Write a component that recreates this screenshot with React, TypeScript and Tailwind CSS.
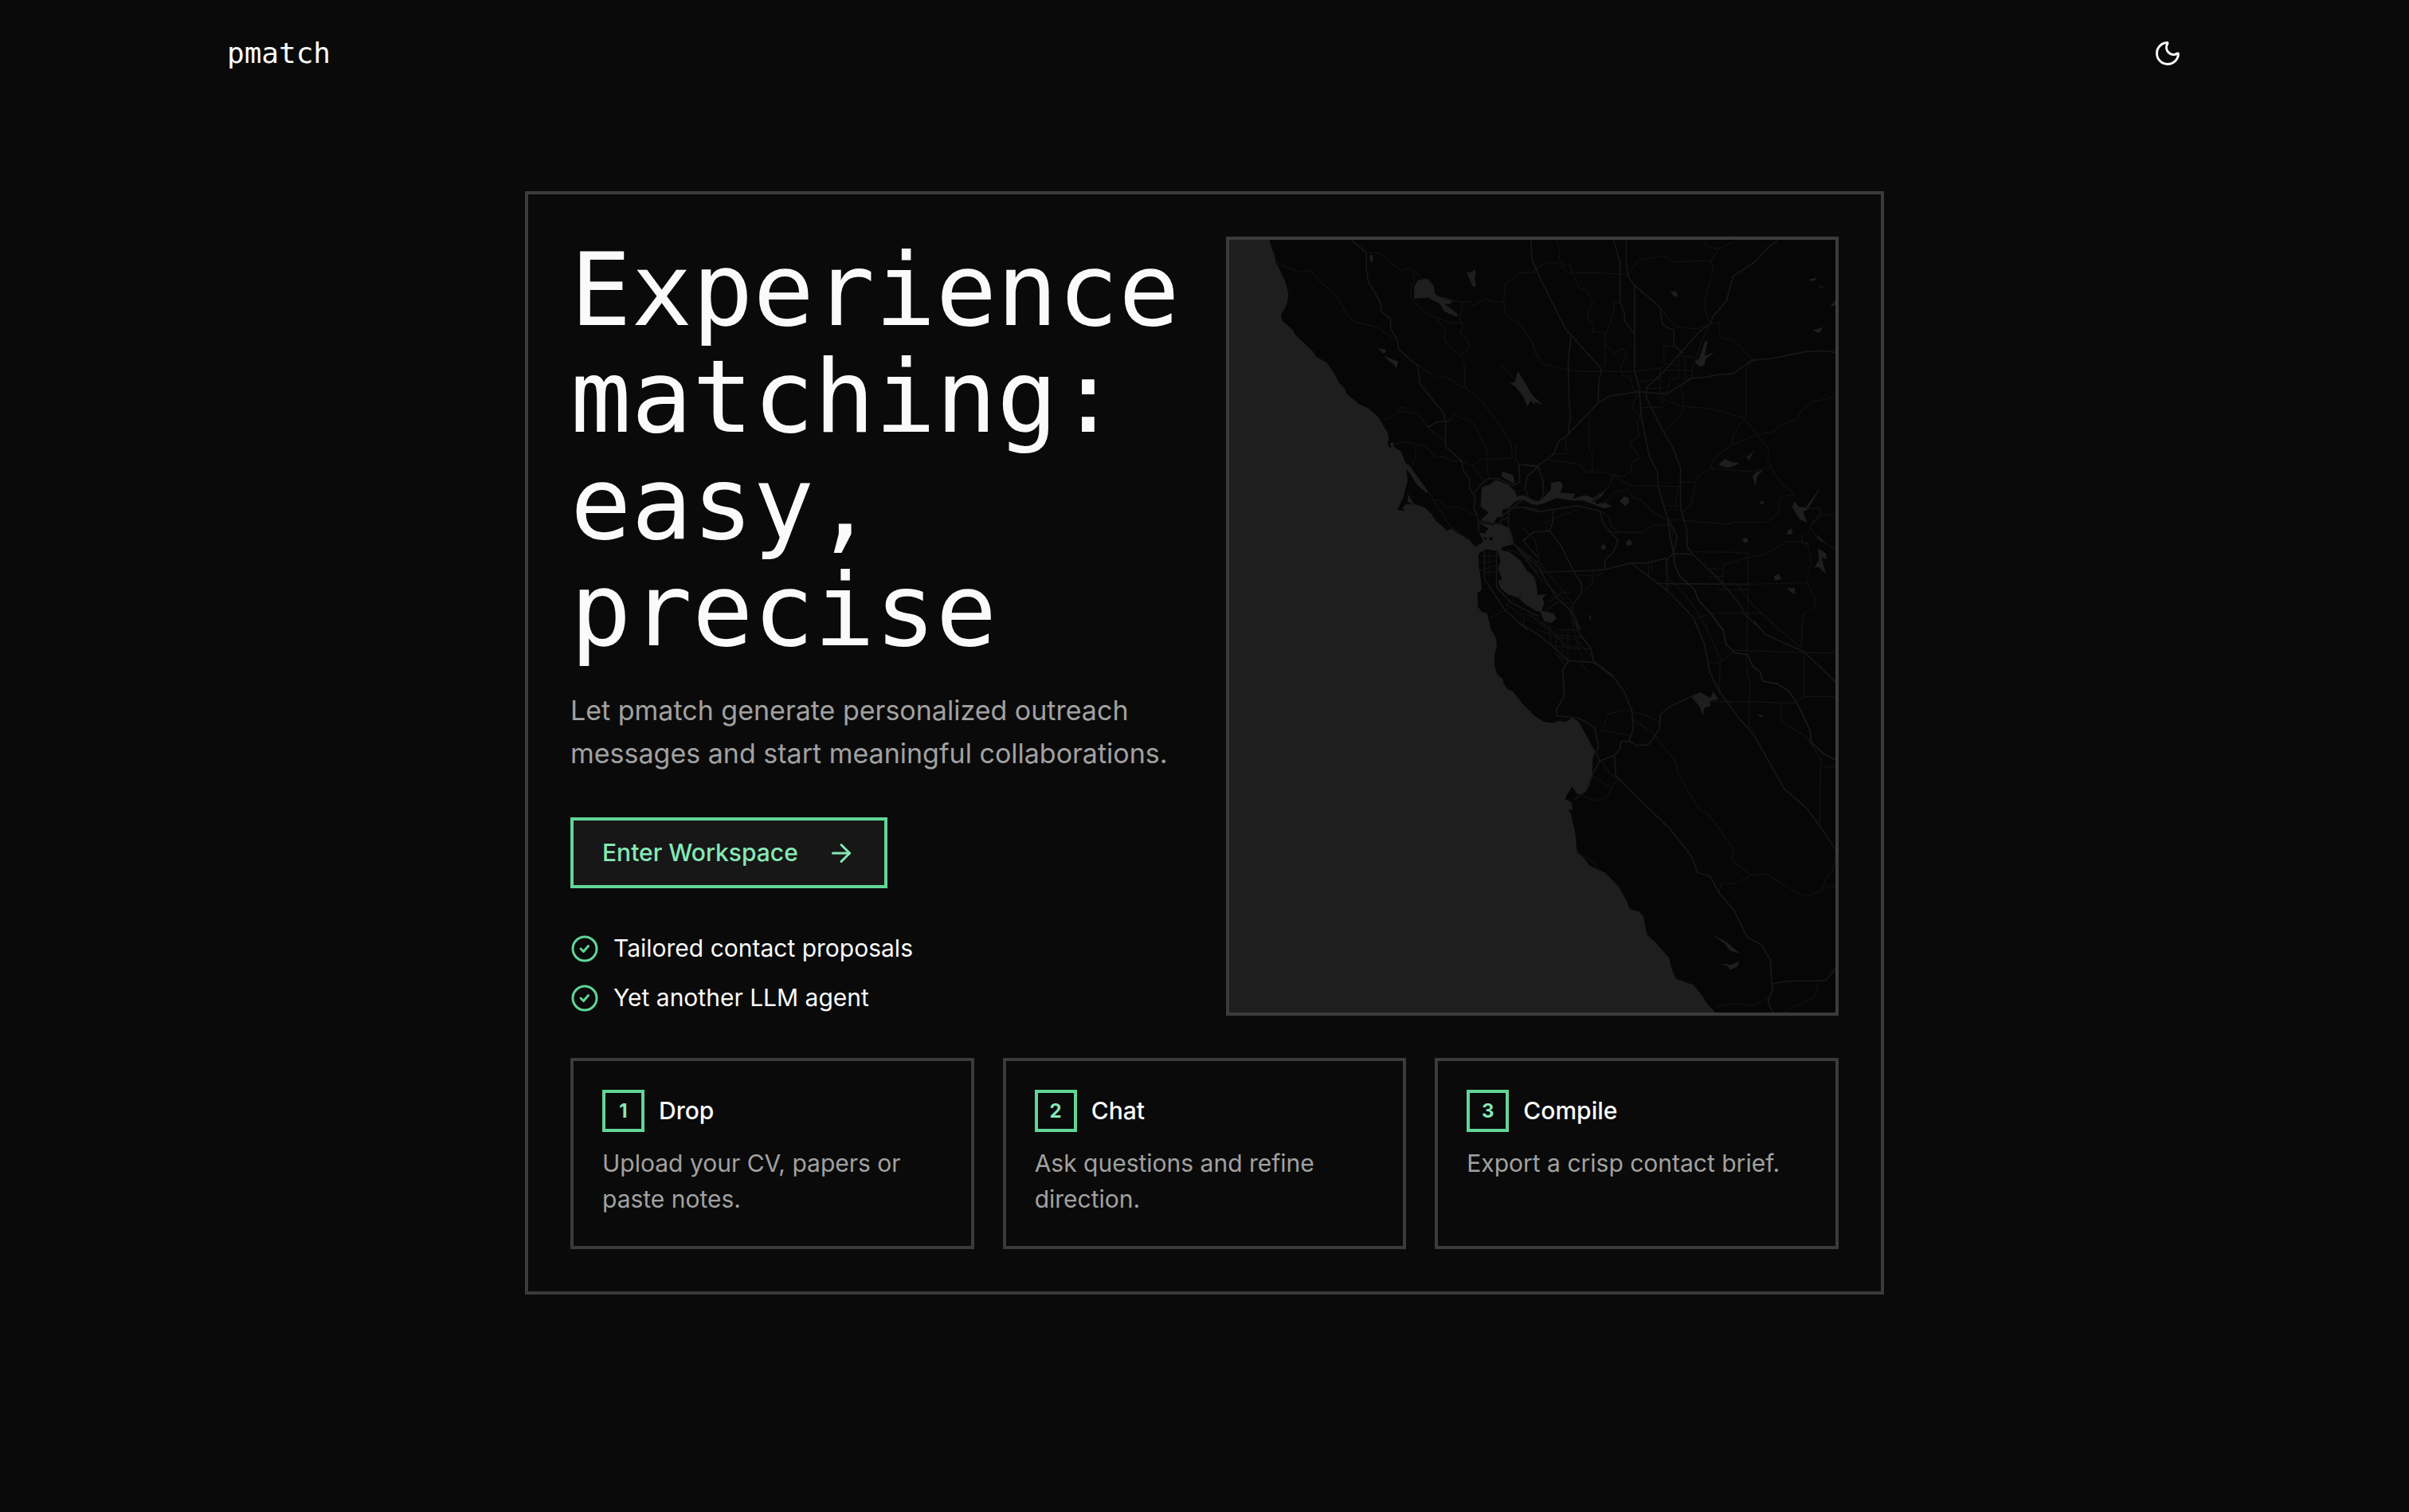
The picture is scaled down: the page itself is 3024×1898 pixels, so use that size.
import { ArrowRight, Moon } from "lucide-react";

const MAJOR_WEST = [
  "M497 33L520 52L555 82L555 140L562 190L608 270L612 305L645 330L648 370L672 410L676 445L750 510L756 575L845 685L853 715L853 812L912 865L922 905L943 935L945 970L965 1005L960 1045L975 1075L978 1130",
  "M958 990L985 955L1015 933L1050 932L1110 960L1135 942M1130 878L1132 940M1130 878L1200 890M1200 890L1160 925L1152 970L1165 1000",
  "M870 715L820 720L786 740M1090 1080L1060 1090L1060 1105L975 1095M1060 1080L1145 1010L1200 1030M1090 1080L1095 1045L1145 1040L1200 1050M1090 1080L1090 1110L1110 1180L1200 1250",
  "M1000 1200L1000 1310L1075 1425L1140 1485L1160 1500M1045 1200L1045 1340L1100 1400L1200 1450M1120 1190L1200 1290M1145 1165L1200 1230M1145 1165L1185 1135",
];
const MINOR_WEST = [
  "M215 120L300 155L345 150L385 195L445 245L475 305L510 342L600 365L672 415",
  "M555 82L605 84L685 150L715 140L735 165L735 190L722 215L725 255L785 315L880 348L915 345",
  "M735 145L762 180M860 260L918 268L908 325L918 360L908 385L940 415L942 440L912 468L925 515L925 580L938 600",
  "M815 325L850 370L850 410L870 440L912 468M742 500L820 555L850 548L938 600L980 630L1060 735L1100 800L1105 855",
  "M918 268L945 265L960 283L1000 258L1040 268L1072 265L1080 200L1130 160L1200 155M1072 265L1080 320L1125 345L1165 395L1200 480",
  "M615 710L640 708L675 680L750 687L786 740L853 795M672 680L680 665L703 668L705 685",
  "M870 715L885 692L960 725L985 780L1010 830L1012 862L1105 855M1012 862L990 858L955 885L995 940M1005 862L1018 935M912 868L955 885",
  "M655 808L690 792L780 812L815 852L845 850L880 868L912 868M743 808L738 860L725 890",
  "M787 980L865 1105L935 1160M810 1015L830 1015L858 1042L905 1040L975 1075M1060 505L1110 555M1118 800L1118 862L1130 878M1175 33L1178 110L1200 150",
  "M985 1225L1035 1225M985 1250L1035 1245M985 1278L1040 1260M1018 1205L1018 1300M1005 1285L1045 1285M1125 1380L1195 1345M1200 1260L1130 1215L1085 1200M1085 1425L1085 1400L1110 1390M1025 1455L1075 1430M1090 1410L1150 1455L1145 1490",
];
const MAJOR_EAST = [
  "M35 33L38 110L60 160L165 370L300 520L290 565L288 648L165 775L140 790L120 840L60 885L0 880",
  "M185 400L175 490L178 640L183 700L175 765M393 33L393 120L400 172L425 205L520 288L530 355L572 375L573 432L605 460",
  "M345 33L370 120L370 270L387 310L387 340L425 390M425 205L425 530L445 600",
  "M960 38L930 60L880 115L795 172L770 265L722 320L708 352L670 378L530 535L470 590L468 625L500 690L535 760L570 820L597 890L598 1045L622 1130L622 1188L640 1215L740 1310L820 1405L845 1450L900 1500",
  "M288 648L330 622L440 605L545 615L640 555L700 550L730 542L795 538L865 488L945 480L1070 455L1140 452L1182 458",
  "M443 610L450 700L480 850L512 910L512 960L545 1070L585 1150L570 1215L545 1240M60 885L80 940L82 990L70 1015",
  "M0 1040L60 1058L110 1050L210 1035L295 1055L305 1100L362 1165L345 1210L312 1240L315 1275L240 1280L75 1285M315 1275L410 1250L470 1250L545 1232M545 1235L548 1355",
  "M10 1165L40 1135L105 1130L150 1190L195 1280L225 1330L225 1365L190 1410L190 1430L220 1500M105 1130L115 1100L120 1050M410 1250L510 1325L560 1365L645 1455L665 1500M510 1328L855 1330M570 1215L640 1217",
  "M0 1210L60 1265L130 1380L180 1425L210 1500",
];
const MINOR_EAST = [
  "M130 33L145 80L138 105L160 130L183 125L190 160L215 215L245 225L268 275L248 305L250 335L272 350L265 378L312 385L318 430L345 460L380 442L395 465L372 520L380 545L410 552L420 600L440 605L415 660L430 685L450 690L435 715L440 770L405 800L445 855L415 870L412 905L380 925L345 918L325 965L265 1020",
  "M0 157L40 157L85 122L135 120L175 160L280 158L400 165L440 110L530 95L575 117L712 112L745 65L800 40M712 112L720 145L690 260L690 300L710 350",
  "M690 33L692 55L730 68L745 60M0 358L40 420L75 500L120 510L150 520L220 530L425 530L500 520L535 515M348 272L370 272M348 272L345 305L315 400L312 530",
  "M520 288L578 360L660 370L708 352M745 345L745 400L800 415L870 485L845 520L845 700M745 345L708 352L680 410L645 510L640 555",
  "M535 435L535 500L590 505M535 435L575 432M520 515L520 610L550 605L555 560L590 555L590 470L650 475M615 475L615 560L640 555L640 525L550 525M465 595L530 590M450 665L530 665L530 620M440 570L520 555",
  "M595 580L608 620L608 680L538 758M510 625L600 660L700 668L835 703L895 780L930 820L925 860L940 895L980 955L1025 990L970 1005L968 1060L925 1095L790 1098L785 1105L605 1090",
  "M835 703L795 770L795 800L720 860L710 895M795 805L880 770L950 755L965 735L1035 710L1050 680L1090 645L1182 625M710 895L860 905L940 890M710 895L660 925L640 1025L605 1060",
  "M255 690L255 828L265 835L265 905M165 775L168 840L115 840M100 862L215 878L245 908L320 910L415 960L590 962L580 1010L578 1050M598 945L650 945M540 1035L598 1035",
  "M300 1030L340 1000L345 985L380 978L400 975L420 1005L450 1015L490 1055L550 1090L605 1085M320 1135L460 1135L490 1110L560 1105L570 1150M295 1055L330 1080L335 1110L370 1135",
  "M640 1208L800 1210L850 1215L850 1500M760 1255L850 1230L920 1215L1000 1168L1075 1175L1090 1250L1070 1320L1105 1385L1100 1420L1060 1440L1055 1500M855 1330L1070 1325M700 1272L758 1272L758 1300L700 1302M758 1255L758 1330M740 1350L850 1350",
  "M1182 1068L1130 1070L1085 1110L1085 1135L1055 1150L1055 1175L1075 1180M1085 1110L1128 1060L1120 1045L1075 1045M1085 1115L1115 1160L1182 1200M478 1245L478 1300M490 1235L490 1280M548 1300L640 1400L700 1500M810 1330L870 1410L970 1500M710 1440L905 1440M645 1462L710 1440",
  "M265 1280L265 1330L225 1360M215 1295L275 1300L310 1285M0 1115L50 1165L75 1285M15 1240L80 1320L160 1390M60 1240L150 1350L190 1400M85 1100L140 1075L210 1050M90 1090L95 1130M100 1400L150 1360L185 1360M90 1430L130 1400L180 1400M0 1440L60 1460L100 1500M30 1440L90 1500",
];
const RIVERS_EAST = [
  "M550 1090L560 1160L572 1215L575 1255L595 1300L650 1350L665 1390L715 1445L755 1500",
];
const MAJOR_SOUTH = [
  "M430 0L500 45L552 90L612 148L702 155L770 210L808 265L835 335L840 400L825 450L797 452L793 480L773 505L778 580L900 710L968 780L1045 885L1065 945L1110 960L1140 1020L1195 1090L1240 1190L1288 1215L1322 1275L1325 1360L1330 1380L1313 1435L1330 1472",
  "M612 148L592 185L598 280L570 330L570 355L650 365L705 400L718 480L705 490M705 490L722 525L773 505M722 525L695 580L672 640L635 670M825 450L850 467L892 465L932 405L935 350L970 320L1060 275",
  "M1055 0L1090 85L1108 190L1140 260L1215 370L1262 425L1370 630L1450 705L1495 770L1551 860M1265 0L1305 50L1440 115L1551 228",
  "M640 0L650 45L690 100L700 150L770 205M1330 1365L1370 1355L1515 1352L1551 1305",
];
const MINOR_SOUTH = [
  "M1108 302L1245 302L1405 308L1440 283L1551 283M1440 115L1440 283M1238 0L1238 180L1250 235L1245 400M1190 108L1440 118L1551 118M1085 0L1150 150L1190 115M1100 158L1145 155L1142 260M1318 0L1430 100L1433 0",
  "M835 342L870 348L930 375M840 372L905 415L930 450L990 530L1000 580L1045 660L1075 710L1100 720L1155 800L1192 860L1185 895L1250 955L1310 950L1365 990L1445 1035L1500 1015L1520 960L1540 940L1551 880",
  "M1140 1020L1150 985L1190 988L1250 960M725 410L830 430M735 400L750 350L800 335L835 337M730 530L760 575L793 600M700 585L765 628L780 600M765 628L745 665L705 675L660 655M640 870L700 905L720 935",
  "M1360 308L1360 378L1450 435L1515 550L1551 548M1498 530L1495 770M1515 998L1551 998M1130 1450L1190 1438L1260 1447L1325 1410M1370 1472L1400 1450L1430 1440L1480 1410L1490 1355M568 120L600 165M655 155L680 190",
  "M500 30L550 50L660 60L690 100M545 0L550 90M520 0L600 90L690 105M590 30L590 130M610 25L610 145M570 60L640 70L665 150M550 90L650 105M625 0L640 70L690 130M570 30L645 35M568 45L568 125L612 148",
];
const RIVERS_SOUTH = [
  "M1130 0L1155 30L1165 85L1195 118L1240 125L1260 170L1285 190L1295 225L1345 235L1385 262L1410 300L1435 350L1460 410L1465 455L1510 500L1551 520",
];
const OCEAN_NORTH =
  "M0 0L190 33L200 70L208 85L215 120L232 150L236 165L248 185L262 235L258 268L245 300L233 315L240 340L280 375L288 392L318 420L355 455L367 475L405 495L430 530L455 575L475 595L480 612L525 650L562 668L600 700L635 760L640 780L635 802L645 820L650 808L685 830L700 865L705 880L710 940L695 1000L672 1050L700 1055L690 1045L702 1030L735 1028L775 1042L800 1065L815 1090L845 1115L858 1130L875 1120L905 1142L940 1160L965 1188L995 1185L1000 1200L978 1215L978 1260L985 1300L990 1350L973 1365L975 1415L990 1435L1010 1440L1022 1500L0 1500Z";
const OCEAN_SOUTH =
  "M-620 -4L333 -4L340 30L357 60L360 95L352 130L352 165L362 200L380 215L385 235L400 258L415 262L455 315L490 352L525 378L560 383L575 375L602 378L625 363L645 375L660 400L690 460L705 488L697 520L695 575L688 615L670 645L645 652L625 622L605 655L600 670L622 678L628 708L612 710L620 720L635 790L640 850L645 870L670 895L685 918L740 945L790 1000L815 1050L828 1082L860 1092L875 1110L888 1180L915 1205L940 1235L965 1265L975 1310L990 1345L1050 1368L1080 1405L1100 1440L1130 1475L-620 1475Z";
const LAKES_WEST = [
  "M735 210L750 185L785 180L808 205L815 240L832 248L885 262L870 275L850 275L895 310L900 325L865 312L845 300L832 275L810 265L790 252L735 255Z",
  "M568 95L575 88L582 105L573 124ZM932 155L950 158L962 145L967 160L963 180L968 210L955 210ZM1125 527L1145 560L1170 605L1190 632L1188 655L1172 638L1160 660L1155 635L1115 585L1095 575L1113 570Z",
  "M620 470L675 492L668 518L655 500L640 490ZM598 442L630 448L622 465ZM1065 905L1085 912L1108 920L1113 955L1090 940L1065 925Z",
  "M643 800L655 795L660 810L685 870L715 880L787 980L782 987L745 955L720 915L690 875ZM712 990L735 1030L710 1020Z",
  "M990 965L1020 955L1042 937L1090 955L1115 980L1122 1000L1145 995L1200 1020L1200 1035L1140 1010L1115 1020L1090 1045L1065 1050L1070 1070L1045 1080L1035 1100L985 1090L1015 1060L985 1038Z",
  "M978 1100L1035 1108L1050 1100L1095 1120L1105 1150L1108 1180L1070 1190L1060 1200L1095 1210L1135 1240L1160 1280L1185 1300L1195 1330L1200 1435L1160 1410L1125 1380L1090 1370L1060 1345L1050 1320L1065 1310L1050 1270L1060 1245L1050 1205L1000 1198L965 1190L995 1170L980 1135L1000 1140L1015 1120Z",
];
const LAKES_EAST = [
  "M0 555L20 585L40 620L80 655L50 645L35 635L22 662L0 610ZM70 1015L110 975L110 948L145 943L155 960L145 985L200 990L190 1010L235 995L270 1005L320 970L300 1000L275 1015L280 1030L310 1020L340 1038L310 1045L230 1015L190 1015L130 1005L75 1030L40 1030L0 1010L0 1002L40 1020Z",
  "M368 1018L385 1000L403 1005L403 1025L388 1035ZM650 492L668 480L690 415L700 420L688 470L725 458L692 482L688 505L670 512ZM740 880L765 858L785 870L820 875L800 885L775 892ZM835 832L850 850L875 828L862 850L855 865ZM868 925L880 910L910 900L885 925L880 960Z",
  "M1018 1040L1025 1018L1045 1040L1070 1040L1128 960L1075 1050L1058 1058L1075 1100L1045 1085ZM1115 1195L1145 1215L1148 1235L1128 1230L1145 1290L1115 1265L1100 1270L1118 1240ZM948 1302L965 1290L978 1310L955 1318ZM1000 1345L1028 1345L1028 1368L1012 1360Z",
  "M1075 185L1112 175L1100 190ZM1110 228L1125 208L1145 210L1125 213ZM1160 285L1182 262L1182 280ZM1095 375L1135 362L1120 385ZM828 1160L848 1155L852 1170L840 1175ZM393 1172L408 1160L415 1180L397 1187ZM297 1188L310 1178L317 1195L303 1202ZM558 230L580 228L590 250L572 245ZM893 1020L912 1018L905 1033ZM250 1440L262 1455L260 1470ZM1105 1140L1150 1180L1125 1170ZM1000 1130L1015 1120L1020 1140L998 1145Z",
  "M0 1268L35 1290L55 1340L60 1370L92 1368L78 1385L85 1400L75 1430L120 1440L130 1460L110 1475L85 1470L70 1435L35 1415L0 1395Z",
];
const LAKES_SOUTH = [
  "M1045 285L1075 265L1110 290L1120 265L1140 292L1108 300L1112 318L1090 325L1083 355L1075 325ZM1275 350L1295 353L1290 362ZM1115 1178L1165 1205L1215 1250L1180 1240L1160 1212ZM1145 1288L1185 1292L1213 1278L1205 1300L1180 1312L1172 1298ZM530 0L562 0L550 4Z",
];

function Roads({ major, minor }: { major: string[]; minor: string[] }) {
  return (
    <g fill="none" strokeLinejoin="round" strokeLinecap="round">
      <path d={minor.join("")} stroke="#111111" strokeWidth={4} />
      <path d={major.join("")} stroke="#171717" strokeWidth={5} />
    </g>
  );
}

function CoastMap() {
  return (
    <svg
      role="img"
      aria-label="Map of the California coast"
      viewBox="1543 301 761 970"
      preserveAspectRatio="xMidYMid slice"
      className="absolute inset-0 h-full w-full bg-[#060606]"
    >
      <g transform="translate(1530 290) scale(.33333)">
        <path d={OCEAN_NORTH} fill="#1e1e1e" />
        <path d={LAKES_WEST.join("")} fill="#1e1e1e" />
        <path
          d="M1018 1155L1030 1152L1030 1165L1020 1165ZM998 1150L1010 1160L1000 1165Z"
          fill="#060606"
        />
        <Roads major={MAJOR_WEST} minor={MINOR_WEST} />
      </g>
      <g transform="translate(1910 290) scale(.33333)">
        <path d={LAKES_EAST.join("")} fill="#1e1e1e" />
        <Roads major={MAJOR_EAST} minor={MINOR_EAST} />
        <path d={RIVERS_EAST.join("")} fill="none" stroke="#1a1a1a" strokeWidth={5} />
      </g>
      <g transform="translate(1750 780) scale(.35714 .33333)">
        <path d={OCEAN_SOUTH} fill="#1e1e1e" />
        <path d={LAKES_SOUTH.join("")} fill="#1e1e1e" />
        <Roads major={MAJOR_SOUTH} minor={MINOR_SOUTH} />
        <path d={RIVERS_SOUTH.join("")} fill="none" stroke="#1a1a1a" strokeWidth={5} />
      </g>
    </svg>
  );
}

function CheckBadge() {
  return (
    <svg
      viewBox="0 0 36 36"
      fill="none"
      stroke="currentColor"
      strokeWidth={3}
      strokeLinecap="round"
      strokeLinejoin="round"
      aria-hidden="true"
      className="size-9 shrink-0 text-[#62d598]"
    >
      <circle cx="18" cy="18" r="15" />
      <path d="M13 18l3.500 3.500 6-7" />
    </svg>
  );
}

const FEATURES = ["Tailored contact proposals", "Yet another LLM agent"];

const STEPS = [
  { title: "Drop", text: "Upload your CV, papers or paste notes." },
  { title: "Chat", text: "Ask questions and refine direction." },
  { title: "Compile", text: "Export a crisp contact brief." },
];

export default function App() {
  return (
    <div className="min-h-screen bg-[#0a0a0a] font-['Inter',sans-serif] text-[30px] leading-[45px] text-[#fafafa]">
      <header className="mx-auto flex h-[133px] max-w-[2560px] items-center justify-between px-[53px]">
        <a href="#" className="font-['DejaVu_Sans_Mono',monospace] text-[36px] leading-[54px]">
          pmatch
        </a>
        <button type="button" aria-label="Toggle theme">
          <Moon className="size-9" />
        </button>
      </header>

      <main className="px-[53px] pt-[107px] pb-[107px]">
        <section className="mx-auto flex max-w-[1706px] flex-col gap-[53px] border-4 border-[#3b3b3b] p-[53px]">
          <div className="grid grid-cols-2 gap-[53px]">
            <div className="flex flex-col items-start">
              <h1 className="font-['DejaVu_Sans_Mono',monospace] text-[127px] leading-[134px]">
                Experience matching: easy, precise
              </h1>
              <p className="mt-8 text-[34px] leading-[54px] text-[#a1a1a1]">
                Let pmatch generate personalized outreach messages and start meaningful
                collaborations.
              </p>
              <button
                type="button"
                className="mt-[53px] flex items-center gap-9 border-4 border-[#62d598] bg-[#171717] px-9 py-[18px] font-medium text-[#86e8b6]"
              >
                Enter Workspace
                <ArrowRight className="size-9" />
              </button>
              <ul className="mt-[53px] flex flex-col gap-[17px]">
                {FEATURES.map((feature) => (
                  <li key={feature} className="flex items-center gap-[18px]">
                    <CheckBadge />
                    {feature}
                  </li>
                ))}
              </ul>
            </div>
            <div className="relative overflow-hidden border-4 border-[#3b3b3b]">
              <CoastMap />
            </div>
          </div>

          <ol className="grid grid-cols-3 gap-9">
            {STEPS.map((step, index) => (
              <li key={step.title} className="border-4 border-[#3b3b3b] p-9">
                <div className="flex items-center gap-[18px]">
                  <span className="flex size-[53px] items-center justify-center border-4 border-[#62d598] text-[24px] font-bold text-[#86e8b6]">
                    {index + 1}
                  </span>
                  <h2 className="font-medium">{step.title}</h2>
                </div>
                <p className="mt-[17px] text-[#a1a1a1]">{step.text}</p>
              </li>
            ))}
          </ol>
        </section>
      </main>
    </div>
  );
}
